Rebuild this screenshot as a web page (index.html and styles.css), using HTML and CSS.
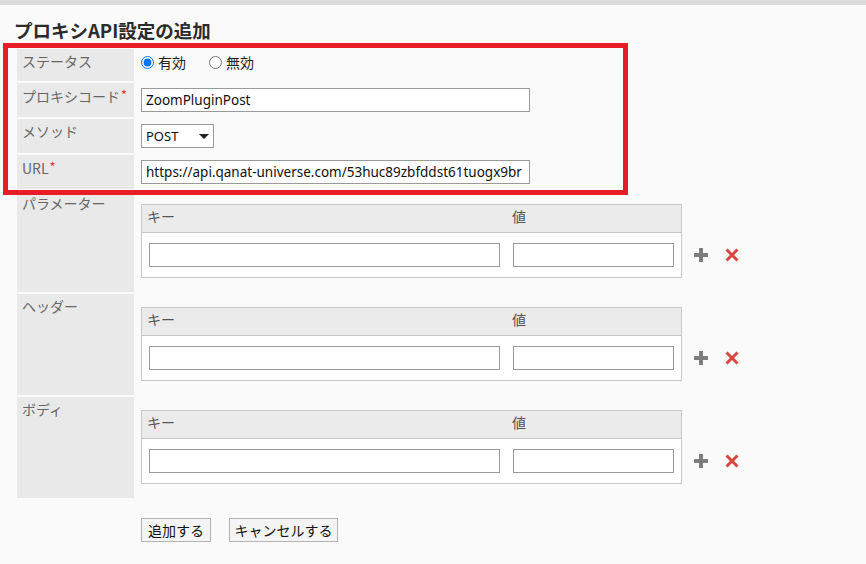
FILE: index.html
```html
<!DOCTYPE html>
<html lang="ja">
<head>
<meta charset="utf-8">
<title>プロキシAPI設定の追加</title>
<link rel="stylesheet" href="styles.css">
</head>
<body>
<div class="topbar"></div>
<div class="page">
  <h1 class="title">プロキシAPI設定の追加</h1>
  <table class="form">
    <tr class="row-status">
      <th class="label">ステータス</th>
      <td class="value">
        <div class="radios">
          <label class="radio"><input type="radio" name="status" checked><span>有効</span></label>
          <label class="radio"><input type="radio" name="status"><span>無効</span></label>
        </div>
      </td>
    </tr>
    <tr>
      <th class="label">プロキシコード<span class="req">*</span></th>
      <td class="value"><input class="text wide" type="text" value="ZoomPluginPost"></td>
    </tr>
    <tr>
      <th class="label">メソッド</th>
      <td class="value">
        <span class="select-wrap">
          <select class="select"><option>POST</option><option>GET</option></select>
        </span>
      </td>
    </tr>
    <tr>
      <th class="label">URL<span class="req">*</span></th>
      <td class="value"><input class="text wide" type="text" value="https://api.qanat-universe.com/53huc89zbfddst61tuogx9br"></td>
    </tr>
    <tr class="row-kv">
      <th class="label">パラメーター</th>
      <td class="value kv-cell">
        <div class="kv-line">
          <div class="kv">
            <div class="kv-head"><span class="kv-key">キー</span><span class="kv-val">値</span></div>
            <div class="kv-body"><input class="text key" type="text"><input class="text val" type="text"></div>
          </div>
          <div class="icons">
            <svg class="icon" viewBox="0 0 14 14" width="14" height="14"><path d="M5 0h4v5h5v4H9v5H5V9H0V5h5z" fill="#7d7d7d"/></svg>
            <svg class="icon" viewBox="0 0 14 14" width="14" height="14"><path d="M2.6 0.5L7 4.9 11.4 0.5 13.5 2.6 9.1 7 13.5 11.4 11.4 13.5 7 9.1 2.6 13.5 0.5 11.4 4.9 7 0.5 2.6z" fill="#d9463f"/></svg>
          </div>
        </div>
      </td>
    </tr>
    <tr class="row-kv">
      <th class="label">ヘッダー</th>
      <td class="value kv-cell">
        <div class="kv-line">
          <div class="kv">
            <div class="kv-head"><span class="kv-key">キー</span><span class="kv-val">値</span></div>
            <div class="kv-body"><input class="text key" type="text"><input class="text val" type="text"></div>
          </div>
          <div class="icons">
            <svg class="icon" viewBox="0 0 14 14" width="14" height="14"><path d="M5 0h4v5h5v4H9v5H5V9H0V5h5z" fill="#7d7d7d"/></svg>
            <svg class="icon" viewBox="0 0 14 14" width="14" height="14"><path d="M2.6 0.5L7 4.9 11.4 0.5 13.5 2.6 9.1 7 13.5 11.4 11.4 13.5 7 9.1 2.6 13.5 0.5 11.4 4.9 7 0.5 2.6z" fill="#d9463f"/></svg>
          </div>
        </div>
      </td>
    </tr>
    <tr class="row-kv">
      <th class="label">ボディ</th>
      <td class="value kv-cell">
        <div class="kv-line">
          <div class="kv">
            <div class="kv-head"><span class="kv-key">キー</span><span class="kv-val">値</span></div>
            <div class="kv-body"><input class="text key" type="text"><input class="text val" type="text"></div>
          </div>
          <div class="icons">
            <svg class="icon" viewBox="0 0 14 14" width="14" height="14"><path d="M5 0h4v5h5v4H9v5H5V9H0V5h5z" fill="#7d7d7d"/></svg>
            <svg class="icon" viewBox="0 0 14 14" width="14" height="14"><path d="M2.6 0.5L7 4.9 11.4 0.5 13.5 2.6 9.1 7 13.5 11.4 11.4 13.5 7 9.1 2.6 13.5 0.5 11.4 4.9 7 0.5 2.6z" fill="#d9463f"/></svg>
          </div>
        </div>
      </td>
    </tr>
  </table>
  <div class="actions">
    <button class="btn btn-add" type="button">追加する</button>
    <button class="btn btn-cancel" type="button">キャンセルする</button>
  </div>
  <div class="highlight"></div>
</div>
</body>
</html>
```

FILE: styles.css
```css
html, body {
  margin: 0;
  padding: 0;
  background: #fafafa;
}
body {
  font-family: "Noto Sans CJK JP", "Noto Sans", sans-serif;
  color: #333;
}
.topbar {
  height: 5px;
  background: #dcdcdc;
}
.page {
  position: relative;
  padding: 13px 14px 0 14px;
}
.title {
  margin: 0;
  font-size: 18.5px;
  line-height: 24px;
  font-weight: bold;
  color: #2b2b2b;
}
.form {
  margin: 5px 0 0 1px;
  border-spacing: 2px;
  border-collapse: separate;
}
.label {
  width: 107px;
  background: #e9e9e9;
  color: #666;
  font-weight: normal;
  font-size: 14px;
  line-height: 20px;
  text-align: left;
  vertical-align: top;
  padding: 2px 5px 0 5px;
  white-space: nowrap;
}
.req {
  color: #e5332a;
  font-size: 13px;
  vertical-align: 2px;
  margin-left: 1px;
}
.value {
  padding: 5px 0 5px 5px;
  vertical-align: middle;
}
.row-status .value {
  padding: 1px 0 7px 5px;
  height: 24px;
}
.radios {
  display: flex;
  align-items: center;
  gap: 23px;
  font-size: 14px;
  line-height: 20px;
  color: #222;
}
.radio {
  display: flex;
  align-items: center;
  gap: 4px;
}
.radio input {
  margin: 0;
  width: 13px;
  height: 13px;
}
.text {
  box-sizing: border-box;
  height: 24px;
  border: 1px solid #9a9a9a;
  background: #fff;
  font-family: "Noto Sans", "Noto Sans CJK JP", sans-serif;
  font-size: 13.5px;
  color: #111;
  padding: 0 4px;
  margin: 0;
  display: block;
  outline: none;
  border-radius: 0;
}
.wide {
  width: 389px;
}
.select-wrap {
  position: relative;
  display: block;
  width: 73px;
}
.select {
  -webkit-appearance: none;
  appearance: none;
  box-sizing: border-box;
  width: 73px;
  height: 24px;
  border: 1px solid #9a9a9a;
  background: #fff;
  font-family: "Noto Sans", sans-serif;
  font-size: 13px;
  color: #111;
  padding: 0 0 0 4px;
  margin: 0;
  border-radius: 0;
  display: block;
}
.select-wrap::after {
  content: "";
  position: absolute;
  left: 58px;
  top: 10px;
  border-left: 5px solid transparent;
  border-right: 5px solid transparent;
  border-top: 5px solid #222;
}
.row-kv .value {
  padding: 13px 0 14px 5px;
}
.kv-line {
  display: flex;
  align-items: flex-end;
}
.kv {
  box-sizing: border-box;
  width: 541px;
  border: 1px solid #c8c8c8;
  background: #fff;
}
.kv-head {
  display: grid;
  grid-template-columns: 364px 1fr;
  align-items: start;
  box-sizing: border-box;
  height: 28px;
  padding-top: 1px;
  background: #ebebeb;
  border-bottom: 1px solid #c8c8c8;
  font-size: 14px;
  line-height: 20px;
  color: #555;
}
.kv-key {
  padding-left: 5px;
}
.kv-val {
  padding-left: 6px;
}
.kv-body {
  display: grid;
  grid-template-columns: 364px 1fr;
  padding: 10px 0 10px 0;
}
.key {
  width: 351px;
  margin-left: 7px;
}
.val {
  width: 161px;
  margin-left: 7px;
}
.icons {
  display: flex;
  gap: 17px;
  margin: 0 0 16px 12px;
}
.icon {
  display: block;
}
.actions {
  display: flex;
  gap: 18px;
  margin: 18px 0 0 127px;
}
.btn {
  box-sizing: border-box;
  height: 24px;
  padding: 0;
  border: 1px solid #b3b3b3;
  background: #f4f4f4;
  font-family: "Noto Sans CJK JP", sans-serif;
  font-size: 14px;
  line-height: 20px;
  color: #111;
  border-radius: 0;
}
.btn-add {
  width: 70px;
}
.btn-cancel {
  width: 109px;
}
.highlight {
  position: absolute;
  left: 3px;
  top: 38px;
  width: 625px;
  height: 152px;
  box-sizing: border-box;
  border: 5px solid #e81c25;
  pointer-events: none;
}
```
